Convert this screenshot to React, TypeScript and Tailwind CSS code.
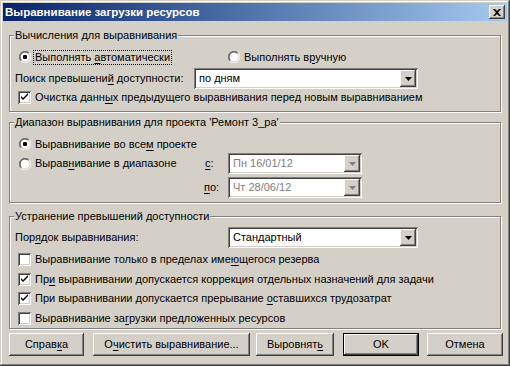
import React from "react";

const raised =
  "shadow-[inset_-1px_-1px_#404040,inset_1px_1px_#ffffff,inset_-2px_-2px_#808080,inset_2px_2px_#d4d0c8]";
const sunken =
  "shadow-[inset_1px_1px_#808080,inset_-1px_-1px_#ffffff,inset_2px_2px_#404040,inset_-2px_-2px_#d4d0c8]";

function U({ children }: { children: React.ReactNode }) {
  return <span className="underline decoration-1 underline-offset-[2px]">{children}</span>;
}

function Radio({ checked = false }: { checked?: boolean }) {
  return (
    <svg width="12" height="12" viewBox="0 0 12 12" className="shrink-0">
      <circle cx="6" cy="6" r="5" fill="#fff" />
      <path d="M1.76 10.24 A6 6 0 0 1 10.24 1.76" stroke="#808080" strokeWidth="1" fill="none" />
      <path d="M1.76 10.24 A6 6 0 0 0 10.24 1.76" stroke="#ffffff" strokeWidth="1" fill="none" />
      <path d="M2.46 9.54 A5 5 0 0 1 9.54 2.46" stroke="#404040" strokeWidth="1" fill="none" />
      <path d="M2.46 9.54 A5 5 0 0 0 9.54 2.46" stroke="#d4d0c8" strokeWidth="1" fill="none" />
      {checked && <rect x="4" y="4" width="4" height="4" rx="1.2" fill="#000" />}
    </svg>
  );
}

function Check({ checked = false }: { checked?: boolean }) {
  return (
    <div className={`w-[13px] h-[13px] bg-white shrink-0 ${sunken} flex items-center justify-center`}>
      {checked && (
        <svg width="13" height="13" viewBox="0 0 13 13">
          <path d="M3 5 V7 L5 9 L10 4 V2 L5 7 L3 5 Z" fill="#000" />
        </svg>
      )}
    </div>
  );
}

function Arrow({ disabled = false }: { disabled?: boolean }) {
  return (
    <div className={`w-[16px] h-[17px] bg-[#d4d0c8] ${raised} flex items-center justify-center`}>
      <svg width="7" height="4" viewBox="0 0 7 4">
        <path d="M0 0 H7 L3.5 4 Z" fill={disabled ? "#808080" : "#000"} />
      </svg>
    </div>
  );
}

function Select({ value, w, disabled = false }: { value: string; w: string; disabled?: boolean }) {
  return (
    <div className={`${w} h-[21px] bg-white ${sunken} flex items-center justify-between pl-[5px] pr-[2px]`}>
      <span className={disabled ? "text-[#808080]" : "text-black"}>{value}</span>
      <Arrow disabled={disabled} />
    </div>
  );
}

function Group({ title, h, children }: { title: React.ReactNode; h: string; children: React.ReactNode }) {
  return (
    <div className={`relative ${h} border border-[#808080] shadow-[1px_1px_0_#ffffff,inset_1px_1px_0_#ffffff]`}>
      <span className="absolute left-[4px] top-[-7px] bg-[#d4d0c8] px-[1px] leading-[13px] whitespace-nowrap">
        {title}
      </span>
      {children}
    </div>
  );
}

function Btn({ children, w, def = false }: { children: React.ReactNode; w: string; def?: boolean }) {
  return (
    <div
      className={`${w} h-[23px] flex items-center justify-center bg-[#d4d0c8] ${
        def
          ? "border border-black shadow-[inset_-1px_-1px_#404040,inset_1px_1px_#ffffff,inset_-2px_-2px_#808080,inset_2px_2px_#d4d0c8]"
          : raised
      }`}
    >
      {children}
    </div>
  );
}

export default function App() {
  return (
    <div
      className="w-[510px] h-[366px] bg-[#d4d0c8] p-[3px] text-[11px] leading-[13px] text-black shadow-[inset_-1px_-1px_#404040,inset_1px_1px_#d4d0c8,inset_-2px_-2px_#808080,inset_2px_2px_#ffffff] overflow-hidden"
      style={{ fontFamily: '"Liberation Sans", Arial, sans-serif' }}
    >
      {/* title bar */}
      <div className="h-[18px] flex items-center justify-between bg-gradient-to-r from-[#0a246a] to-[#a6caf0] pl-[2px] pr-[2px]">
        <span className="text-white font-bold text-[11.5px]">Выравнивание загрузки ресурсов</span>
        <div className={`w-[16px] h-[14px] bg-[#d4d0c8] ${raised} flex items-center justify-center`}>
          <svg width="8" height="7" viewBox="0 0 8 7">
            <path d="M0 0 H2 L4 2 L6 0 H8 L5 3.5 L8 7 H6 L4 5 L2 7 H0 L3 3.5 Z" fill="#000" />
          </svg>
        </div>
      </div>

      <div className="mx-[6px] mt-[14px]">
        <Group title="Вычисления для выравнивания" h="h-[77px]">
          <div className="pt-[13px] pl-[9px] flex items-center h-[29px]">
            <div className="w-[209px] flex items-center">
              <Radio checked />
              <span className="ml-[3px] px-[1px] outline outline-1 outline-dotted outline-black">
                Выполнять <U>а</U>втоматически
              </span>
            </div>
            <div className="flex items-center">
              <Radio />
              <span className="ml-[4px]">
                Выполнять в<U>р</U>учную
              </span>
            </div>
          </div>
          <div className="mt-[3px] flex items-center pl-[5px] h-[21px]">
            <span className="w-[179px]">
              Поиск превышени<U>й</U> доступности:
            </span>
            <Select value="по дням" w="w-[224px]" />
          </div>
          <div className="mt-[1px] flex items-center pl-[8px] h-[14px]">
            <Check checked />
            <span className="ml-[4px]">
              Очистка данн<U>ы</U>х предыдущего выравнивания перед новым выравниванием
            </span>
          </div>
        </Group>

        <div className="mt-[10px]">
          <Group title="Диапазон выравнивания для проекта 'Ремонт 3_ра'" h="h-[81px]">
            <div className="pt-[13px] pl-[9px] flex items-center h-[29px]">
              <Radio checked />
              <span className="ml-[4px]">
                Выравнивание во все<U>м</U> проекте
              </span>
            </div>
            <div className="mt-[1px] flex items-center h-[21px] pl-[9px]">
              <div className="w-[186px] flex items-center">
                <Radio />
                <span className="ml-[4px]">
                  Вырав<U>н</U>ивание в диапазоне
                </span>
              </div>
              <span className="w-[23px]">
                <U>с</U>:
              </span>
              <Select value="Пн 16/01/12" w="w-[134px]" disabled />
            </div>
            <div className="mt-[3px] flex items-center h-[21px] pl-[194px]">
              <span className="w-[24px]">
                <U>п</U>о:
              </span>
              <Select value="Чт 28/06/12" w="w-[134px]" disabled />
            </div>
          </Group>
        </div>

        <div className="mt-[13px]">
          <Group title="Устранение превышений доступности" h="h-[113px]">
            <div className="pt-[10px] pl-[5px] flex items-center h-[31px]">
              <span className="w-[213px]">
                Пор<U>я</U>док выравнивания:
              </span>
              <Select value="Стандартный" w="w-[190px]" />
            </div>
            <div className="pl-[8px]">
              <div className="mt-[4px] flex items-center h-[14px]">
                <Check />
                <span className="ml-[4px]">
                  Выравнивание только в пределах име<U>ю</U>щегося резерва
                </span>
              </div>
              <div className="mt-[6px] flex items-center h-[14px]">
                <Check checked />
                <span className="ml-[4px]">
                  Пр<U>и</U> выравнивании допускается коррекция отдельных назначений для задачи
                </span>
              </div>
              <div className="mt-[5px] flex items-center h-[14px]">
                <Check checked />
                <span className="ml-[4px]">
                  При выравнивании допускается прерывание <U>о</U>ставшихся трудозатрат
                </span>
              </div>
              <div className="mt-[6px] flex items-center h-[14px]">
                <Check />
                <span className="ml-[4px]">
                  Выравнивание за<U>г</U>рузки предложенных ресурсов
                </span>
              </div>
            </div>
          </Group>
        </div>
      </div>

      <div className="mt-[4px] ml-[6px] flex">
        <Btn w="w-[75px]">
          <span>
            Справ<U>к</U>а
          </span>
        </Btn>
        <div className="ml-[9px]">
          <Btn w="w-[157px]">
            <span>
              О<U>ч</U>истить выравнивание...
            </span>
          </Btn>
        </div>
        <div className="ml-[6px]">
          <Btn w="w-[78px]">
            <span>
              Выровнят<U>ь</U>
            </span>
          </Btn>
        </div>
        <div className="ml-[9px]">
          <Btn w="w-[76px]" def>
            <span>OK</span>
          </Btn>
        </div>
        <div className="ml-[8px]">
          <Btn w="w-[76px]">
            <span>Отмена</span>
          </Btn>
        </div>
      </div>
    </div>
  );
}
